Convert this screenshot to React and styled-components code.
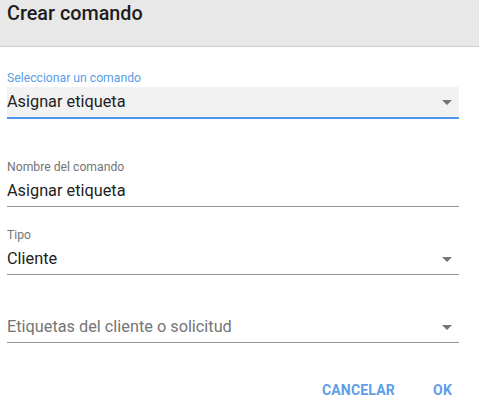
import React from "react"
import styled, { createGlobalStyle } from "styled-components"

const GlobalStyle = createGlobalStyle`
  body {
    margin: 0;
    background: #ffffff;
    font-family: Roboto, "Liberation Sans", sans-serif;
  }
`;

const fields = [
  { label: "Seleccionar un comando", value: "Asignar etiqueta", select: true, active: true },
  { label: "Nombre del comando", value: "Asignar etiqueta" },
  { label: "Tipo", value: "Cliente", select: true },
  { label: "", placeholder: "Etiquetas del cliente o solicitud", select: true },
];

function Arrow() {
  return (
    <ArrowIcon width="10" height="5" viewBox="0 0 10 5">
      <path d="M0 0 L10 0 L5 5 Z" fill="#757575" />
    </ArrowIcon>
  );
}

export default function App() {
  return (
    <Dialog>
      <GlobalStyle />
      <Header>
        <Title>Crear comando</Title>
      </Header>
      <Form>
        {fields.map((f, i) => (
          <Field key={i}>
            <Label $active={f.active}>{f.label}</Label>
            <Control $active={f.active}>
              <Value $placeholder={!f.value}>{f.value || f.placeholder}</Value>
              {f.select && <Arrow />}
            </Control>
          </Field>
        ))}
      </Form>
      <Actions>
        <ActionButton>Cancelar</ActionButton>
        <ActionButton>OK</ActionButton>
      </Actions>
    </Dialog>
  );
}

const Dialog = styled.div`
  width: 479px;
  height: 415px;
  background: #fff;
`;

const Header = styled.div`
  height: 47px;
  box-sizing: border-box;
  background: #e8e8e8;
  border-bottom: 1px solid #cfcfcf;
  padding: 0 7px;
`;

const Title = styled.h2`
  margin: 0;
  font-size: 19.8px;
  line-height: 28px;
  font-weight: 500;
  color: #1d1d1d;
`;

const Form = styled.div`
  padding: 24px 20px 0 7px;
  display: flex;
  flex-direction: column;
  gap: 21px;
`;

const Field = styled.div`
  display: flex;
  flex-direction: column;
  &:nth-child(2) {
    margin-top: 20px;
  }
`;

const Label = styled.div`
  height: 14px;
  font-size: 12.2px;
  line-height: 14px;
  color: ${(p) => (p.$active ? "#5a9de8" : "#757575")};
  margin-bottom: 2px;
`;

const Control = styled.div`
  height: 30px;
  display: flex;
  align-items: center;
  justify-content: space-between;
  background: ${(p) => (p.$active ? "#f2f2f2" : "transparent")};
  border-bottom: ${(p) => (p.$active ? "2px solid #4f97ea" : "1px solid #949494")};
  padding-right: 7px;
`;

const Value = styled.span`
  font-size: 16.3px;
  line-height: 20px;
  color: ${(p) => (p.$placeholder ? "#757575" : "#222")};
`;

const ArrowIcon = styled.svg`
  display: block;
  flex-shrink: 0;
`;

const Actions = styled.div`
  display: flex;
  justify-content: flex-end;
  gap: 38px;
  padding: 39px 27px 0 0;
`;

const ActionButton = styled.button`
  border: none;
  background: transparent;
  padding: 0;
  font-family: Roboto, "Liberation Sans", sans-serif;
  font-size: 14px;
  font-weight: 700;
  text-transform: uppercase;
  color: #5e9ee8;
  letter-spacing: 0.2px;
  cursor: pointer;
`;
